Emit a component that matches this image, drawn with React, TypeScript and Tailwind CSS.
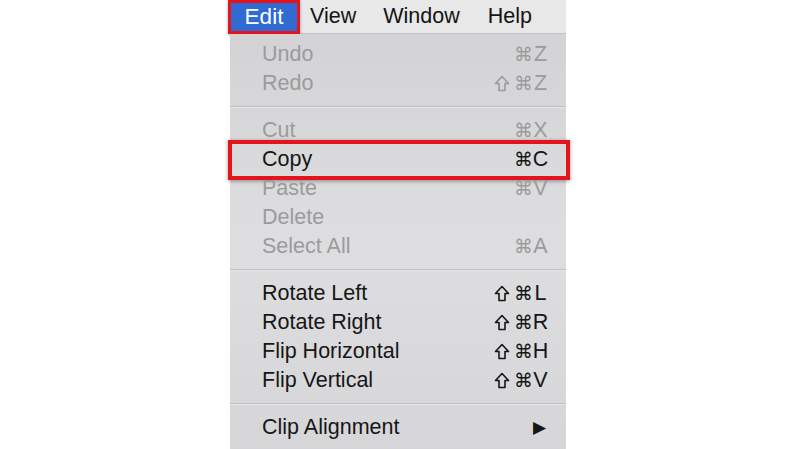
import React from "react";

type Item =
  | { kind: "sep" }
  | { kind: "item"; label: string; keys?: string[]; disabled?: boolean; submenu?: boolean; marked?: boolean };

const items: Item[] = [
  { kind: "item", label: "Undo", keys: ["⌘", "Z"], disabled: true },
  { kind: "item", label: "Redo", keys: ["⇧", "⌘", "Z"], disabled: true },
  { kind: "sep" },
  { kind: "item", label: "Cut", keys: ["⌘", "X"], disabled: true },
  { kind: "item", label: "Copy", keys: ["⌘", "C"], marked: true },
  { kind: "item", label: "Paste", keys: ["⌘", "V"], disabled: true },
  { kind: "item", label: "Delete", disabled: true },
  { kind: "item", label: "Select All", keys: ["⌘", "A"], disabled: true },
  { kind: "sep" },
  { kind: "item", label: "Rotate Left", keys: ["⇧", "⌘", "L"] },
  { kind: "item", label: "Rotate Right", keys: ["⇧", "⌘", "R"] },
  { kind: "item", label: "Flip Horizontal", keys: ["⇧", "⌘", "H"] },
  { kind: "item", label: "Flip Vertical", keys: ["⇧", "⌘", "V"] },
  { kind: "sep" },
  { kind: "item", label: "Clip Alignment", submenu: true },
];

function ShiftIcon() {
  return (
    <svg width="16" height="17" viewBox="0 0 16 17" fill="none">
      <path
        d="M8 1.5L14.5 8.5H11V15.5H5V8.5H1.5L8 1.5Z"
        stroke="currentColor"
        strokeWidth="1.6"
        strokeLinejoin="round"
      />
    </svg>
  );
}

function Shortcut({ keys }: { keys: string[] }) {
  const mods = keys.slice(0, -1);
  const letter = keys[keys.length - 1];
  return (
    <span className="flex items-center">
      {mods.includes("⇧") && (
        <span className="w-[20px] flex justify-start">
          <ShiftIcon />
        </span>
      )}
      {mods.includes("⌘") && <span className="w-[18px] text-center font-['DejaVu_Sans'] text-[19px]">⌘</span>}
      <span className="w-[17px] text-center">{letter}</span>
    </span>
  );
}

export default function App() {
  return (
    <div className="w-[800px] h-[449px] bg-white overflow-hidden font-['Liberation_Sans',Arial,sans-serif]">
      <div className="ml-[230px] w-[336px] h-full flex flex-col">
        {/* Menu bar */}
        <div className="h-[34px] shrink-0 flex items-center bg-[#e8e8e8] border-b border-[#c4c4c6] text-[21.5px] text-[#141414]">
          <span className="-ml-[2px] h-[34px] w-[72px] flex items-center justify-center bg-[#2f6bd0] text-white text-[22.5px] border-[3px] border-[#e5141c] shadow-[0_1px_3px_rgba(0,0,0,0.35)]">
            Edit
          </span>
          <span className="ml-[10px]">View</span>
          <span className="ml-[27px]">Window</span>
          <span className="ml-[28px]">Help</span>
        </div>

        {/* Menu */}
        <div className="flex-1 pt-[6px] bg-gradient-to-b from-[#d3d3d5] via-[#dedee0] to-[#d6d6d8] text-[21.5px]">
          {items.map((it, i) =>
            it.kind === "sep" ? (
              <div key={i} className="h-[18px] flex flex-col justify-center">
                <div className="h-[2px] bg-[#bfbfc1] border-b border-[#e6e6e8]" />
              </div>
            ) : (
              <div
                key={i}
                className={`relative h-[29px] flex items-center justify-between pl-[32px] pr-[17px] ${
                  it.disabled ? "text-[#9b9b9d]" : "text-[#161616]"
                }`}
              >
                <span>{it.label}</span>
                {it.keys && <Shortcut keys={it.keys} />}
                {it.submenu && <span className="text-[17px] mr-[3px]">▶</span>}
                {it.marked && (
                  <div className="absolute -left-[2px] -right-[4px] -top-[5px] -bottom-[6px] border-[4px] border-[#e5141c] shadow-[0_1px_4px_rgba(0,0,0,0.4)]" />
                )}
              </div>
            )
          )}
        </div>
      </div>
    </div>
  );
}
